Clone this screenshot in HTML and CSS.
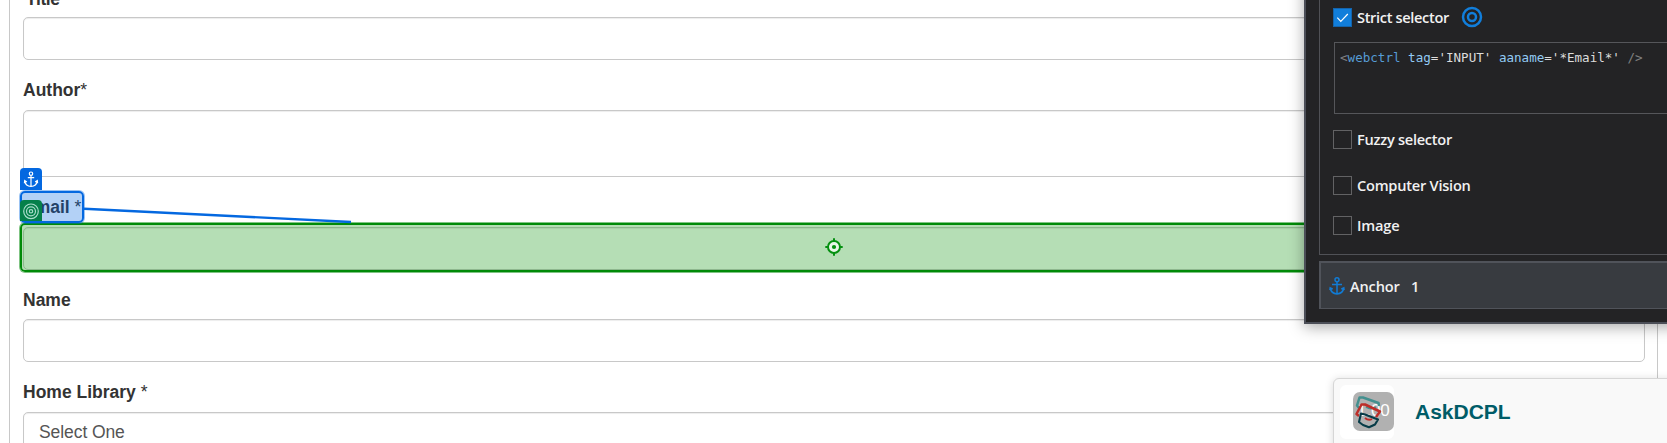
FILE: index.html
```html
<!DOCTYPE html>
<html lang="en">
<head>
<meta charset="utf-8">
<title>Form selector</title>
<link rel="stylesheet" href="styles.css">
</head>
<body>
<main class="page">
  <form class="form">
    <label class="label label-title">Title</label>
    <div class="field"></div>
    <label class="label label-author">Author<span class="star">*</span></label>
    <div class="field field-tall"></div>
    <label class="label label-email">Email <span class="star">*</span></label>
    <div class="field"></div>
    <label class="label label-name">Name</label>
    <div class="field"></div>
    <label class="label label-library">Home Library <span class="star">*</span></label>
    <div class="field field-select">Select One</div>
  </form>

  <div class="target-box">
    <svg class="crosshair" width="18" height="18" viewBox="0 0 18 18"><circle cx="9" cy="9" r="6" fill="#e9f6e9" stroke="#059010" stroke-width="2"/><circle cx="9" cy="9" r="2.1" fill="#059010"/><path d="M9 .3v3M9 14.7v3M.3 9h3M14.7 9h3" stroke="#059010" stroke-width="2"/></svg>
  </div>
  <svg class="connector" width="268" height="20" viewBox="0 0 268 20"><path d="M0 4.7L267 18" stroke="#0468e0" stroke-width="2.4"/></svg>
  <div class="anchor-box"></div>
  <div class="tag tag-anchor">
    <svg width="22" height="22" viewBox="0 0 22 22" fill="none" stroke="#fff" stroke-width="1.2"><circle cx="11" cy="5.700" r="1.700"/><path d="M11 7.400v11.100M7.800 9.600h6.400M4.800 12.800c.5 3.600 3 5.400 6.200 5.700 3.200-.3 5.700-2.100 6.200-5.700M4.400 15.200l.3-2.600 2.200 1.300M17.600 15.200l-.3-2.600-2.200 1.300"/></svg>
  </div>
  <div class="tag tag-target">
    <svg width="22" height="21" viewBox="0 0 22 21" fill="none" stroke="#a9dccb" stroke-width="1.2"><circle cx="11" cy="11.300" r="7.300"/><circle cx="11" cy="11.300" r="4.500"/><circle cx="11" cy="11.300" r="1.700"/></svg>
  </div>

  <aside class="inspector">
    <section class="methods">
      <div class="option option-strict">
        <span class="check check-on"><svg width="17" height="17" viewBox="0 0 17 17"><path d="M3.300 8.700l3.500 3.600 7-7.300" fill="none" stroke="#fff" stroke-width="1.200"/></svg></span>
        <span class="option-text strict-text">Strict selector</span>
        <svg class="rings" width="22" height="22" viewBox="0 0 22 22" fill="none" stroke="#117edb" stroke-width="2.500"><circle cx="11" cy="11" r="9"/><circle cx="11" cy="11" r="4"/></svg>
      </div>
      <pre class="code"><span class="punct">&lt;</span><span class="element">webctrl</span> <span class="attr">tag</span>='INPUT' <span class="attr">aaname</span>='*Email*' <span class="punct">/&gt;</span></pre>
      <div class="option option-fuzzy"><span class="check"></span><span class="option-text fuzzy-text">Fuzzy selector</span></div>
      <div class="option option-vision"><span class="check"></span><span class="option-text vision-text">Computer Vision</span></div>
      <div class="option option-image"><span class="check"></span><span class="option-text image-text">Image</span></div>
    </section>
    <section class="anchor-row">
      <svg width="16" height="18" viewBox="0 0 16 18" fill="none" stroke="#117bd4" stroke-width="1.500"><circle cx="8" cy="2.800" r="2"/><path d="M8 4.800v12M3 7.500h10M1.200 11c.6 3.500 3.300 5.700 6.800 6 3.500-.3 6.200-2.500 6.800-6M.9 13.200L1.200 10.800 3.700 12M15.100 13.200l-.3-2.400-2.500 1.200"/></svg>
      <span class="anchor-name">Anchor</span><span class="anchor-count">1</span>
    </section>
  </aside>

  <div class="chat">
    <div class="chat-logo">
      <div class="chat-tile">
        <span class="chat-time">1:00</span>
        <svg width="41" height="39" viewBox="0 0 41 39" fill="none" stroke-width="2" stroke-linejoin="round"><path d="M6 16L4 13.500 6.500 5.500 10 5.500 25.500 11 26 14" stroke="#43908f" stroke-width="2.500"/><path d="M13 15Q18 18 23 15" stroke="#43908f"/><path d="M6 24L3.500 22 8.500 12.500 12 12.500 27 19.500 23 25" stroke="#bd2e29" stroke-width="2.500"/><path d="M12 26Q15.500 29 19 27" stroke="#bd2e29" stroke-width="2"/><path d="M8 21.500L6 30 10 33 16 35.300 22 32.500 25 27.500 12 22.500Z" stroke="#073c48" stroke-width="2.100"/></svg>
      </div>
    </div>
    <span class="chat-name">AskDCPL</span>
  </div>
</main>
</body>
</html>
```
FILE: styles.css
```css
* { box-sizing: border-box; }
body { margin: 0; background: #fff; font-family: "Liberation Sans", Arial, sans-serif; }
.page { position: relative; width: 1667px; height: 443px; overflow: hidden; }
.form {
  display: flex; flex-direction: column;
  width: 1649px; height: 480px; margin-left: 9px; padding: 0 12px 0 13px;
  border: solid #c8c8c8; border-width: 0 1px;
}
.label {
  display: block; flex: none; height: 50px; padding-top: 18px;
  font-size: 17.5px; line-height: 25px; font-weight: 700; color: #333; white-space: pre;
}
.star { font-weight: 400; }
.label-title { height: 19px; margin-top: -2px; padding: 0 0 0 3px; line-height: 2px; letter-spacing: -.4px; }
.field {
  flex: none; height: 43px; border: 1px solid #c8c8c8; border-radius: 5px;
  box-shadow: inset 0 1px 1px rgba(0, 0, 0, .075);
}
.field-tall { height: 67px; border-radius: 5px 5px 0 0; }
.field-select { height: 60px; padding: 7px 15px; font-size: 17.5px; line-height: 25px; letter-spacing: -.08px; color: #555; }
.label-name { height: 49px; }

.target-box {
  position: absolute; left: 20px; top: 223px; width: 1400px; height: 49px;
  border: 2px solid #008a08; border-radius: 5px;
  background: rgba(0, 140, 0, .29); background-clip: padding-box;
  box-shadow: 0 0 0 1px rgba(0, 138, 8, .5);
}
.crosshair { position: absolute; left: 803px; top: 13px; }
.connector { position: absolute; left: 84px; top: 204px; }
.anchor-box {
  position: absolute; left: 20px; top: 191px; width: 64px; height: 32px;
  border: 2px solid #0468e0; border-radius: 5px; background: rgba(4, 104, 224, .3);
  box-shadow: 0 0 0 1px rgba(4, 104, 224, .4);
}
.tag { position: absolute; left: 20px; width: 22px; border-radius: 4px 4px 0 0; }
.tag svg { display: block; }
.tag-anchor { top: 168px; height: 22px; background: #0468e0; }
.tag-target { top: 200px; height: 21px; background: #05804a; }

.inspector {
  position: absolute; left: 1304px; top: -20px; width: 500px; height: 344px;
  display: flex; flex-direction: column; gap: 6px; padding: 0 0 0 13px;
  border: 2px solid #4b4e57; background: #232325; color: #f1f1f1;
  box-shadow: 0 3px 14px rgba(0, 0, 0, .34);
  font-family: "Open Sans", "Noto Sans", sans-serif; font-size: 14.6px; font-weight: 600;
}
.methods { flex: none; height: 273px; border: solid #505156; border-width: 0 0 1px 1px; padding: 26px 0 0 13px; }
.option { display: flex; align-items: center; height: 19px; gap: 5px; white-space: nowrap; }
.option-text { padding-bottom: 2px; }
.check { flex: none; width: 19px; height: 19px; border: 1px solid #626264; }
.check-on { border-color: #1464ac; background: #117edb; }
.check svg { display: block; }
.strict-text { width: 93px; letter-spacing: -.35px; }
.fuzzy-text { letter-spacing: -.28px; }
.vision-text { letter-spacing: -.24px; }
.image-text { letter-spacing: -.2px; }
.rings { margin: 0 0 1px 6px; }
.code {
  width: 460px; height: 72px; margin: 15px 0 0 1px; padding: 6px 0 0 5px;
  border: 1px solid #55565a; color: #dcdcdc;
  font: 400 12.57px/17px "DejaVu Sans Mono", monospace;
}
.punct { color: #808080; }
.element { color: #569cd6; }
.attr { color: #92caf4; }
.option-fuzzy { margin-top: 16px; }
.option-vision { margin-top: 27px; }
.option-image { margin-top: 21px; }
.anchor-row {
  flex: none; display: flex; align-items: center; height: 48px; padding: 0 0 0 8px;
  border: solid #50535a; border-width: 2px 0 1px 2px; background: #383b40;
}
.anchor-name { width: 50px; margin: 0 11px 0 5px; letter-spacing: -.15px; }

.chat {
  position: absolute; left: 1333px; top: 378px; width: 400px; height: 90px;
  display: flex; align-items: flex-start; gap: 21px; padding: 6px;
  border: 1px solid #d6d6d6; border-radius: 6px; background: #f9f9f9;
  box-shadow: 0 1px 8px rgba(0, 0, 0, .15);
}
.chat-logo { width: 54px; height: 54px; padding: 7px 0 0 13px; border-radius: 6px; background: #fff; }
.chat-tile { position: relative; width: 41px; height: 39px; border-radius: 7px; background: #b1b1b1; }
.chat-time { position: absolute; left: 4px; top: 9px; font: 17px/20px "Liberation Sans", sans-serif; letter-spacing: -.1px; color: #fff; }
.chat-tile svg { position: absolute; left: 0; top: 0; }
.chat-name { padding-top: 13px; font-size: 21px; line-height: 28px; font-weight: 700; color: #005c68; }
```
